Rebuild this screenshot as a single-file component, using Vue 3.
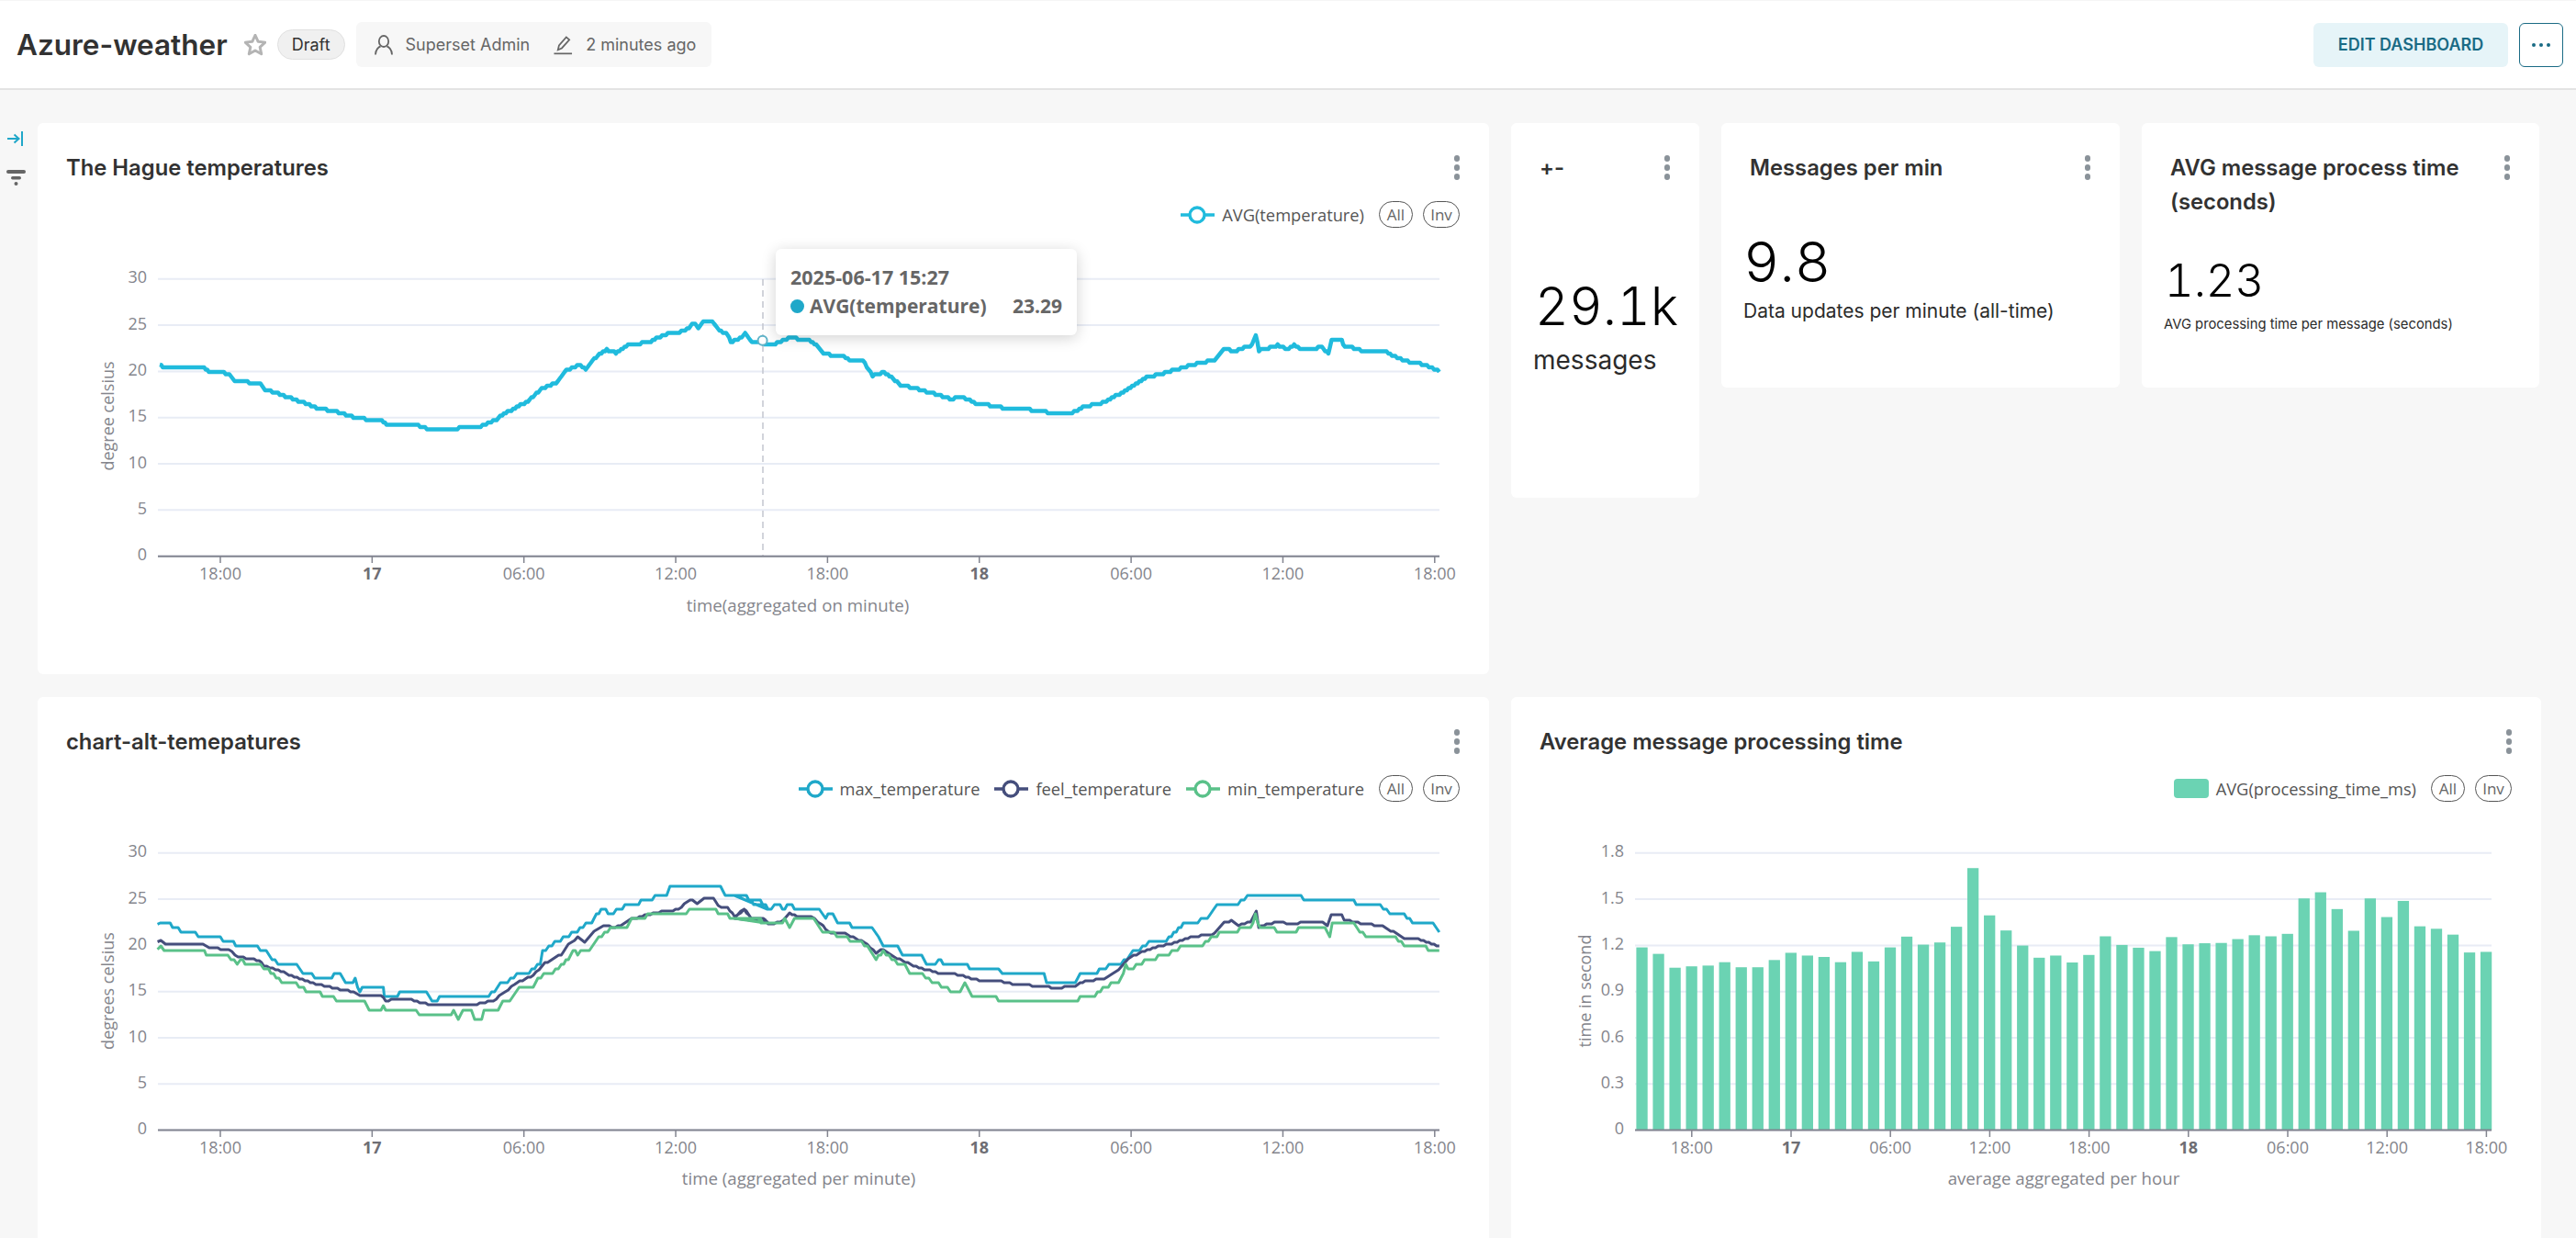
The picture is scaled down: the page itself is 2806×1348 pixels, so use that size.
<template>
  <div class="page">
    <header class="topbar">
      <div class="title-group">
        <h1 class="dash-title">Azure-weather</h1>
        <svg class="star" viewBox="1.5 1.5 21 21">
          <path d="M12 2.6l2.8 6.2 6.7.7-5 4.5 1.4 6.6-5.9-3.4-5.9 3.4 1.4-6.6-5-4.5 6.7-.7z" />
        </svg>
        <span class="draft">Draft</span>
        <div class="meta">
          <svg class="meta-icon" viewBox="0 0 20 22">
            <ellipse cx="10" cy="7" rx="5.2" ry="6" />
            <path d="M1 21.5c0-5.5 3.6-8.6 5.6-9M19 21.5c0-5.5-3.6-8.6-5.6-9" />
          </svg>
          <span>Superset Admin</span>
          <svg class="meta-icon pencil" viewBox="0 0 22 22">
            <path d="M5 16.5l1.2-5L14.5 2l3.5 3-8.6 9.6z" />
            <path d="M0.5 20.8h20.5" />
          </svg>
          <span>2 minutes ago</span>
        </div>
      </div>
      <div class="actions">
        <button class="edit-btn">EDIT DASHBOARD</button>
        <button class="more-btn"><i></i><i></i><i></i></button>
      </div>
    </header>

    <div class="body">
      <aside class="filter-rail">
        <svg class="rail-arrow" viewBox="0 0 17 16">
          <path d="M0 8h12M7.5 3.5L12.5 8l-5 4.500M16 0v16" />
        </svg>
        <svg class="rail-filter" viewBox="0 0 21 17">
          <rect x="0" y="0" width="21" height="4" rx="2" />
          <rect x="5" y="7" width="11" height="3.4" rx="1.7" />
          <circle cx="10.500" cy="15" r="2" />
        </svg>
      </aside>

      <main class="grid">
        <div class="row row-top">
          <section class="card chart-card">
            <div class="card-head">
              <h2>The Hague temperatures</h2>
              <span class="kebab"><i></i><i></i><i></i></span>
            </div>
            <div class="legend">
              <span class="legend-item">
                <svg class="legend-line" viewBox="0 0 37 20" :style="{ color: '#20bbdd' }">
                  <path d="M0 10h37" /><circle cx="18" cy="10" r="8" />
                </svg>AVG(temperature)
              </span>
              <span class="pill all">All</span>
              <span class="pill">Inv</span>
            </div>
            <svg class="plot" width="1581" height="450" viewBox="41 255 1581 450">
              <line v-for="g in tempGrid" :key="g.label" class="gridline" x1="172" x2="1568" :y1="g.y - 625" :y2="g.y - 625" />
              <text v-for="g in tempGrid" :key="'l' + g.label" class="tick end" x="160" :y="g.y - 625 - 2.500">{{ g.label }}</text>
              <path class="series thick" :d="haguePath" stroke="#20bbdd" />
              <line x1="831" x2="831" y1="304" y2="605" class="crosshair" />
              <circle cx="830.6" cy="370.7" r="5" fill="#fff" stroke="#5fb3c8" stroke-width="2" />
              <line class="axis" x1="172" x2="1568" y1="605.7" y2="605.7" />
              <g v-for="(t, i) in timeTicks" :key="i">
                <line class="axis-tick" :x1="240 + i * 165.35" :x2="240 + i * 165.35" y1="605.7" y2="613" />
                <text class="tick mid" :class="{ strong: t.bold }" :x="240 + i * 165.35" y="624">{{ t.label }}</text>
              </g>
              <text class="tick mid" transform="rotate(-90 117 453)" x="117" y="453">degree celsius</text>
              <text class="tick mid axis-name" x="869" y="658">time(aggregated on minute)</text>
            </svg>
            <div class="tooltip">
              <div class="tt-time">2025-06-17 15:27</div>
              <div class="tt-row">
                <span class="tt-dot"></span>
                <span class="tt-name">AVG(temperature)</span>
                <span class="tt-val">23.29</span>
              </div>
            </div>
          </section>

          <section class="card tile tile-narrow">
            <div class="card-head">
              <h2>+-</h2>
              <span class="kebab"><i></i><i></i><i></i></span>
            </div>
            <div class="big big-messages">29.1k</div>
            <div class="sub sub-messages">messages</div>
          </section>

          <section class="card tile tile-wide">
            <div class="card-head">
              <h2>Messages per min</h2>
              <span class="kebab"><i></i><i></i><i></i></span>
            </div>
            <div class="big big-rate">9.8</div>
            <div class="sub sub-rate">Data updates per minute (all-time)</div>
          </section>

          <section class="card tile tile-wide">
            <div class="card-head">
              <h2>AVG message process time (seconds)</h2>
              <span class="kebab"><i></i><i></i><i></i></span>
            </div>
            <div class="big big-time">1.23</div>
            <div class="sub sub-time">AVG processing time per message (seconds)</div>
          </section>
        </div>

        <div class="row row-bottom">
          <section class="card chart-card">
            <div class="card-head">
              <h2>chart-alt-temepatures</h2>
              <span class="kebab"><i></i><i></i><i></i></span>
            </div>
            <div class="legend">
              <span v-for="s in altSeries" :key="s.name" class="legend-item">
                <svg class="legend-line" viewBox="0 0 37 20" :style="{ color: s.color }">
                  <path d="M0 10h37" /><circle cx="18" cy="10" r="8" />
                </svg>{{ s.name }}
              </span>
              <span class="pill all">All</span>
              <span class="pill">Inv</span>
            </div>
            <svg class="plot" width="1581" height="470" viewBox="41 880 1581 470">
              <line v-for="g in tempGrid" :key="g.label" class="gridline" x1="172" x2="1568" :y1="g.y" :y2="g.y" />
              <text v-for="g in tempGrid" :key="'l' + g.label" class="tick end" x="160" :y="g.y - 2.500">{{ g.label }}</text>
              <path v-for="s in altSeries" :key="s.name" class="series" :d="s.path" :stroke="s.color" />
              <line class="axis" x1="172" x2="1568" y1="1230.6" y2="1230.6" />
              <g v-for="(t, i) in timeTicks" :key="i">
                <line class="axis-tick" :x1="240 + i * 165.35" :x2="240 + i * 165.35" y1="1230.6" y2="1238" />
                <text class="tick mid" :class="{ strong: t.bold }" :x="240 + i * 165.35" y="1249">{{ t.label }}</text>
              </g>
              <text class="tick mid" transform="rotate(-90 117 1079)" x="117" y="1079">degrees celsius</text>
              <text class="tick mid axis-name" x="870" y="1282">time (aggregated per minute)</text>
            </svg>
          </section>

          <section class="card chart-card">
            <div class="card-head">
              <h2>Average message processing time</h2>
              <span class="kebab"><i></i><i></i><i></i></span>
            </div>
            <div class="legend">
              <span class="legend-item">
                <span class="legend-swatch"></span>AVG(processing_time_ms)
              </span>
              <span class="pill all">All</span>
              <span class="pill">Inv</span>
            </div>
            <svg class="plot" width="1122" height="470" viewBox="1646 880 1122 470">
              <line v-for="g in barGrid" :key="g.label" class="gridline" x1="1781" x2="2714" :y1="g.y" :y2="g.y" />
              <text v-for="g in barGrid" :key="'l' + g.label" class="tick end" x="1769" :y="g.y - 2.500">{{ g.label }}</text>
              <rect v-for="b in bars" :key="b.x" class="bar" :x="b.x" :y="b.y" width="12.3" :height="b.h" />
              <line class="axis" x1="1781" x2="2714" y1="1230.6" y2="1230.6" />
              <g v-for="(t, i) in timeTicks" :key="i">
                <line class="axis-tick" :x1="1842.8 + i * 108.2" :x2="1842.8 + i * 108.2" y1="1230.6" y2="1238" />
                <text class="tick mid" :class="{ strong: t.bold }" :x="1842.8 + i * 108.2" y="1249">{{ t.label }}</text>
              </g>
              <text class="tick mid" transform="rotate(-90 1726 1079)" x="1726" y="1079">time in second</text>
              <text class="tick mid axis-name" x="2248" y="1282">average aggregated per hour</text>
            </svg>
          </section>
        </div>
      </main>
    </div>
  </div>
</template>

<script setup>
const timeTicks = ['18:00', '17', '06:00', '12:00', '18:00', '18', '06:00', '12:00', '18:00'].map((label) => ({
  label,
  bold: label.length === 2
}))

// y positions are for the bottom row; the top chart shifts them by its own offset
const tempGrid = [30, 25, 20, 15, 10, 5, 0].map((v) => ({ label: v, y: 1230.6 - v * 10.06 }))
const barGrid = ['1.8', '1.5', '1.2', '0.9', '0.6', '0.3', '0'].map((label) => ({
  label,
  y: 1230.6 - (Number(label) / 1.8) * 301.8
}))

// turns a rough list of points into a stair-stepped line, like per-minute samples
const stepped = (pts, stepY, stepX = 3) => {
  let d = `M${pts[0][0].toFixed(1)} ${pts[0][1].toFixed(1)}`
  for (let i = 1; i < pts.length; i++) {
    const [x0, y0] = pts[i - 1]
    const [x1, y1] = pts[i]
    const n = Math.max(1, Math.round((x1 - x0) / stepX))
    for (let k = 1; k <= n; k++) {
      const x = x0 + ((x1 - x0) * k) / n
      const y = Math.round((y0 + ((y1 - y0) * k) / n) / stepY) * stepY
      d += `L${x.toFixed(1)} ${y.toFixed(1)}`
    }
  }
  return d
}

const hague = [
  [174, 397], [179, 401], [184, 400.7], [222.4, 401], [227.5, 404], [248, 406.7], [255.6, 414], [283.7, 418],
  [288.8, 424], [319, 434], [345, 444], [365, 448], [391, 455.7], [416, 458], [421, 461.7], [452, 461.7],
  [465, 466.7], [518, 466], [539, 458], [549, 450.7], [569, 440], [577, 435], [590, 423], [607.7, 416],
  [615, 404], [630.6, 397], [638, 401.7], [651, 386.7], [661, 381], [671, 384], [684, 375], [707, 373],
  [715, 368], [727.5, 363], [738, 363], [750.5, 357], [755.6, 351.7], [760.7, 357.7], [766, 351], [776, 351],
  [783.7, 360.7], [791, 362.7], [796, 371.7], [804, 370], [811.7, 362.7], [817, 371], [829.6, 373.3],
  [840.8, 376], [848.5, 372], [861, 368], [881.6, 370], [889, 375], [897, 386], [917, 386.7], [927.5, 392.7],
  [940, 393], [950.5, 409], [963, 405], [981, 419], [1001.5, 424], [1034.7, 434], [1050, 433], [1062.8, 439],
  [1080.6, 441.7], [1096, 444.7], [1131.6, 446.7], [1147, 450], [1170, 448.7], [1177.6, 444], [1203, 438],
  [1223.5, 426.7], [1249, 410.7], [1269, 406], [1300, 396.7], [1323, 391.7], [1333, 379], [1343, 382.7],
  [1363.8, 376], [1367.9, 364.3], [1371.4, 381.7], [1391.8, 376], [1402, 380], [1409.7, 376], [1420, 380.7],
  [1440, 378], [1447, 385], [1450.5, 369], [1461.7, 369], [1463, 375.7], [1488.8, 383], [1506.6, 381.7],
  [1529.6, 393], [1552.6, 397], [1567.8, 404]
]
const haguePath = stepped(hague, 2.5, 2)

// traced in two strips: left half and right half of the plot
const traced = (left, right) => [
  ...left.map(([x, y]) => [40 + x / 1.96, 760 + y / 2.667]),
  ...right.map(([x, y]) => [800 + x / 1.912, 760 + y / 2.667])
]

const maxTemp = traced(
  [[258,657],[285,657],[290,665],[320,682],[345,687],[392,687],[398,702],[420,705],[425,716],[465,718],[490,740],[515,775],[555,778],[575,805],[600,808],[605,820],[630,820],[635,806],[648,806],[665,830],[680,820],[690,850],[695,836],[740,836],[742,865],[770,865],[775,850],[826,850],[850,882],[865,866],[965,866],[990,830],[1005,822],[1025,800],[1045,800],[1075,770],[1080,735],[1100,715],[1130,692],[1160,670],[1185,650],[1195,630],[1210,615],[1225,625],[1250,608],[1285,600],[1290,582],[1320,580],[1330,570],[1345,568],[1352,553],[1460,553],[1470,572],[1490,578],[1515,575],[1525,590],[1545,590],[1560,610]],
  [[0,575],[25,575],[40,600],[60,600],[70,612],[90,600],[100,612],[115,600],[125,612],[170,612],[190,635],[205,630],[215,648],[235,648],[245,662],[280,662],[300,690],[310,715],[335,717],[350,742],[390,745],[405,778],[425,762],[440,775],[485,775],[495,792],[550,792],[558,806],[645,806],[650,822],[710,822],[720,806],[755,806],[760,792],[780,775],[805,775],[830,738],[850,725],[870,703],[905,700],[920,680],[935,660],[965,652],[985,635],[1005,605],[1030,605],[1055,590],[1075,568],[1110,568],[1115,580],[1125,568],[1165,568],[1180,580],[1285,582],[1295,598],[1345,600],[1365,625],[1395,630],[1418,658],[1455,658],[1468,685]]
)
const feelTemp = traced(
  [[258,708],[265,703],[275,715],[355,715],[375,727],[410,730],[430,752],[475,762],[485,778],[510,787],[550,810],[590,828],[620,838],[670,852],[690,862],[735,866],[745,878],[800,875],[830,888],[870,890],[940,890],[975,878],[1000,855],[1020,830],[1060,805],[1085,770],[1120,745],[1135,715],[1155,695],[1170,712],[1190,680],[1210,660],[1235,668],[1270,642],[1310,628],[1340,618],[1370,615],[1395,585],[1410,598],[1425,580],[1445,580],[1455,605],[1475,610],[1490,635],[1510,615],[1525,638],[1550,640],[1560,652]],
  [[0,640],[20,612],[35,640],[60,640],[70,655],[95,652],[115,625],[130,635],[160,635],[180,655],[195,680],[225,682],[270,708],[295,740],[310,730],[350,765],[390,785],[430,800],[465,803],[510,820],[550,822],[585,832],[650,838],[665,842],[710,838],[725,825],[770,815],[800,790],[820,755],[860,730],[905,715],[950,695],[1000,685],[1020,650],[1035,648],[1050,660],[1075,650],[1087,618],[1092,665],[1130,650],[1150,655],[1225,650],[1235,662],[1243,630],[1265,630],[1270,645],[1310,655],[1350,662],[1395,698],[1430,702],[1468,720]]
)
const minTemp = traced(
  [[258,730],[265,720],[272,733],[358,733],[362,747],[408,748],[428,775],[435,762],[445,770],[478,778],[485,790],[500,795],[517,820],[560,835],[575,852],[605,853],[615,868],[640,875],[650,880],[700,880],[715,912],[730,910],[740,895],[750,910],[810,910],[830,926],[880,926],[890,913],[900,928],[910,912],[928,912],[935,927],[950,927],[955,910],[985,905],[995,882],[1010,875],[1030,838],[1060,835],[1070,808],[1095,805],[1120,775],[1135,760],[1145,730],[1155,742],[1180,730],[1200,695],[1225,672],[1255,670],[1270,645],[1310,630],[1380,625],[1400,615],[1445,610],[1455,628],[1475,628],[1485,642],[1545,645],[1555,655]],
  [[0,640],[50,645],[60,655],[95,658],[105,640],[115,665],[125,642],[165,642],[190,685],[225,688],[235,700],[265,702],[295,760],[310,735],[340,770],[355,775],[365,798],[385,795],[405,820],[425,830],[450,852],[470,850],[480,825],[495,867],[545,868],[550,880],[710,882],[725,868],[745,868],[790,825],[805,820],[815,780],[825,785],[860,760],[905,745],[935,720],[975,715],[1005,690],[1020,675],[1075,672],[1085,630],[1095,672],[1165,675],[1175,672],[1230,672],[1240,688],[1245,657],[1290,660],[1315,688],[1365,688],[1395,715],[1435,717],[1445,735],[1468,735]]
)

const altSeries = [
  { name: 'max_temperature', color: '#1fa8c9', path: stepped(maxTemp, 5) },
  { name: 'feel_temperature', color: '#454e7c', path: stepped(feelTemp, 2) },
  { name: 'min_temperature', color: '#5ac189', path: stepped(minTemp, 5) }
]

const processing = [
  1.187, 1.145, 1.055, 1.064, 1.069, 1.091, 1.058, 1.058, 1.105, 1.152, 1.134, 1.125, 1.091,
  1.158, 1.096, 1.187, 1.257, 1.205, 1.219, 1.321, 1.702, 1.395, 1.297, 1.199, 1.12, 1.134,
  1.089, 1.138, 1.259, 1.203, 1.185, 1.163, 1.254, 1.207, 1.214, 1.216, 1.241, 1.266, 1.259,
  1.275, 1.505, 1.545, 1.436, 1.295, 1.505, 1.384, 1.489, 1.324, 1.308, 1.27, 1.154, 1.158
]
const bars = processing.map((v, i) => {
  const h = (v / 1.8) * 301.8
  return { x: 1782.4 + i * 18.03, y: 1230.6 - h, h }
})
</script>

<style>
html,
body {
  margin: 0;
  overflow: hidden;
  background: #f7f7f7;
}
</style>

<style scoped>
.page {
  height: 1348px;
  overflow: hidden;
  background: #f7f7f7;
  font-family: Inter, "Liberation Sans", sans-serif;
  color: #323232;
}

.topbar {
  display: flex;
  align-items: center;
  justify-content: space-between;
  height: 98px;
  box-sizing: border-box;
  padding: 0 14px 0 18px;
  background: #fff;
  border-top: 1px solid #f5f5f5;
  border-bottom: 2px solid #e3e3e3;
}
.title-group {
  display: flex;
  align-items: center;
}
.dash-title {
  margin: 0 18px 0 0;
  font-size: 31.5px;
  font-weight: 600;
  letter-spacing: 0;
}
.star {
  width: 24px;
  height: 24px;
  fill: none;
  stroke: #b4b4b4;
  stroke-width: 2.6;
  stroke-linejoin: round;
}
.draft {
  margin-left: 12px;
  padding: 0 15px;
  height: 33px;
  line-height: 32px;
  box-sizing: border-box;
  font-size: 18px;
  background: #f0f0f0;
  border: 1px solid #e0e0e0;
  border-radius: 17px;
}
.meta {
  display: flex;
  align-items: center;
  height: 49px;
  margin-left: 12px;
  padding: 0 17px 0 20px;
  background: #f7f7f7;
  border-radius: 6px;
  font-size: 18px;
  color: #666;
}
.meta-icon {
  width: 20px;
  height: 22px;
  margin-right: 14px;
  fill: none;
  stroke: #666;
  stroke-width: 1.8;
}
.pencil {
  width: 21px;
  margin-left: 26px;
}

.actions {
  display: flex;
  gap: 12px;
}
.edit-btn {
  width: 212px;
  height: 48px;
  border: 0;
  border-radius: 6px;
  background: #e6f4f8;
  color: #1a6b85;
  font-family: inherit;
  font-size: 18px;
  font-weight: 600;
}
.more-btn {
  display: flex;
  align-items: center;
  justify-content: center;
  gap: 4px;
  width: 48px;
  height: 48px;
  padding: 0;
  background: #fff;
  border: 1.5px solid #1a6b85;
  border-radius: 6px;
}
.more-btn i {
  width: 4px;
  height: 4px;
  border-radius: 50%;
  background: #1a6b85;
}

.body {
  display: flex;
}
.filter-rail {
  display: flex;
  flex-direction: column;
  align-items: flex-start;
  width: 41px;
  flex: none;
  padding: 45px 0 0 7px;
  box-sizing: border-box;
}
.rail-arrow {
  width: 17px;
  height: 16px;
  margin-left: 1px;
  fill: none;
  stroke: #20a7c9;
  stroke-width: 2;
}
.rail-filter {
  width: 21px;
  height: 17px;
  margin-top: 26px;
  fill: #666;
}

.grid {
  display: flex;
  flex-direction: column;
  gap: 25px;
  width: 2727px;
  padding-top: 36px;
}
.row {
  display: flex;
  gap: 24px;
}
.row-top {
  align-items: flex-start;
}
.card {
  position: relative;
  flex: none;
  background: #fff;
  border-radius: 6px;
}
.chart-card {
  height: 600px;
  width: 1581px;
}
.row-bottom .chart-card:last-child {
  width: 1122px;
}

.card-head {
  display: flex;
  align-items: flex-start;
  justify-content: space-between;
  padding: 30px 32px 0 31px;
}
.card-head h2 {
  margin: 0;
  font-size: 23.8px;
  line-height: 37px;
  font-weight: 600;
  color: #323232;
}
.kebab {
  display: flex;
  flex-direction: column;
  gap: 3.5px;
  margin-top: 5px;
  flex: none;
}
.kebab i {
  width: 6.5px;
  height: 6.5px;
  border-radius: 50%;
  background: #8a9299;
}

.legend {
  display: flex;
  align-items: center;
  justify-content: flex-end;
  height: 29px;
  margin-top: 18px;
  padding-right: 32px;
  font-family: "Open Sans", sans-serif;
  font-size: 18.3px;
  color: #555;
}
.legend-item {
  display: flex;
  align-items: center;
  margin-right: 16px;
}
.legend-line {
  width: 37px;
  height: 20px;
  margin-right: 8px;
  fill: #fff;
  stroke: currentColor;
  stroke-width: 3.4;
}
.legend-swatch {
  width: 38px;
  height: 21px;
  margin-right: 8px;
  border-radius: 4px;
  background: #6bd3b3;
}
.pill {
  display: flex;
  align-items: center;
  justify-content: center;
  width: 40px;
  height: 29px;
  box-sizing: border-box;
  border: 1.5px solid #555;
  border-radius: 15px;
  font-size: 17px;
  color: #666;
}
.pill.all {
  width: 37px;
  margin-right: 11px;
}

.plot {
  display: block;
  margin-top: 7px;
}
.gridline {
  stroke: #e8ecf5;
  stroke-width: 2;
}
.axis {
  stroke: #82848f;
  stroke-width: 2;
}
.axis-tick {
  stroke: #82848f;
  stroke-width: 1.5;
}
.crosshair {
  stroke: #c4c6d0;
  stroke-width: 1.5;
  stroke-dasharray: 7 5;
}
.series {
  fill: none;
  stroke-width: 3;
  stroke-linejoin: round;
}
.series.thick {
  stroke-width: 4.5;
}
.bar {
  fill: #6bd3b3;
}
.tick {
  font-family: "Open Sans", sans-serif;
  font-size: 18px;
  fill: #84858c;
  dominant-baseline: central;
}
.tick.end {
  text-anchor: end;
}
.tick.mid {
  text-anchor: middle;
}
.tick.axis-name {
  font-size: 18.7px;
}
.tick.strong {
  font-weight: 700;
  fill: #6e6e74;
}

.tooltip {
  position: absolute;
  left: 804px;
  top: 137px;
  width: 328px;
  height: 94px;
  padding: 16px;
  box-sizing: border-box;
  background: #fff;
  border-radius: 6px;
  box-shadow: 0 3px 16px rgba(0, 0, 0, 0.18);
  font-family: "Open Sans", sans-serif;
  font-size: 21px;
  font-weight: 700;
  color: #666;
}
.tt-time {
  font-size: 21.5px;
  line-height: 30px;
}
.tt-row {
  display: flex;
  align-items: center;
  height: 32px;
}
.tt-dot {
  width: 15px;
  height: 15px;
  margin-right: 6px;
  border-radius: 50%;
  background: #1fa8c9;
}
.tt-val {
  margin-left: auto;
}

.tile {
  height: 288px;
}
.tile-narrow {
  width: 205px;
  height: 408px;
}
.tile-wide:nth-child(3) {
  width: 434px;
}
.tile-wide:nth-child(4) {
  width: 433px;
}
.big,
.sub {
  white-space: nowrap;
}
.big {
  color: #000;
  font-weight: 300;
  font-variant-numeric: tabular-nums;
}
.sub {
  color: #2b2b2b;
}
.big-messages {
  margin: 97px 0 0 26px;
  font-size: 57px;
  line-height: 72px;
}
.sub-messages {
  margin: 2px 0 0 24px;
  font-size: 28px;
  line-height: 40px;
}
.big-rate {
  margin: 46px 0 0 24px;
  font-size: 61px;
  line-height: 76px;
}
.sub-rate {
  margin: 2px 0 0 24px;
  font-size: 21px;
  line-height: 28px;
}
.big-time {
  margin: 38px 0 0 25px;
  font-size: 49px;
  line-height: 60px;
}
.sub-time {
  margin: 6px 0 0 24px;
  font-size: 14.8px;
  line-height: 22px;
}
</style>
